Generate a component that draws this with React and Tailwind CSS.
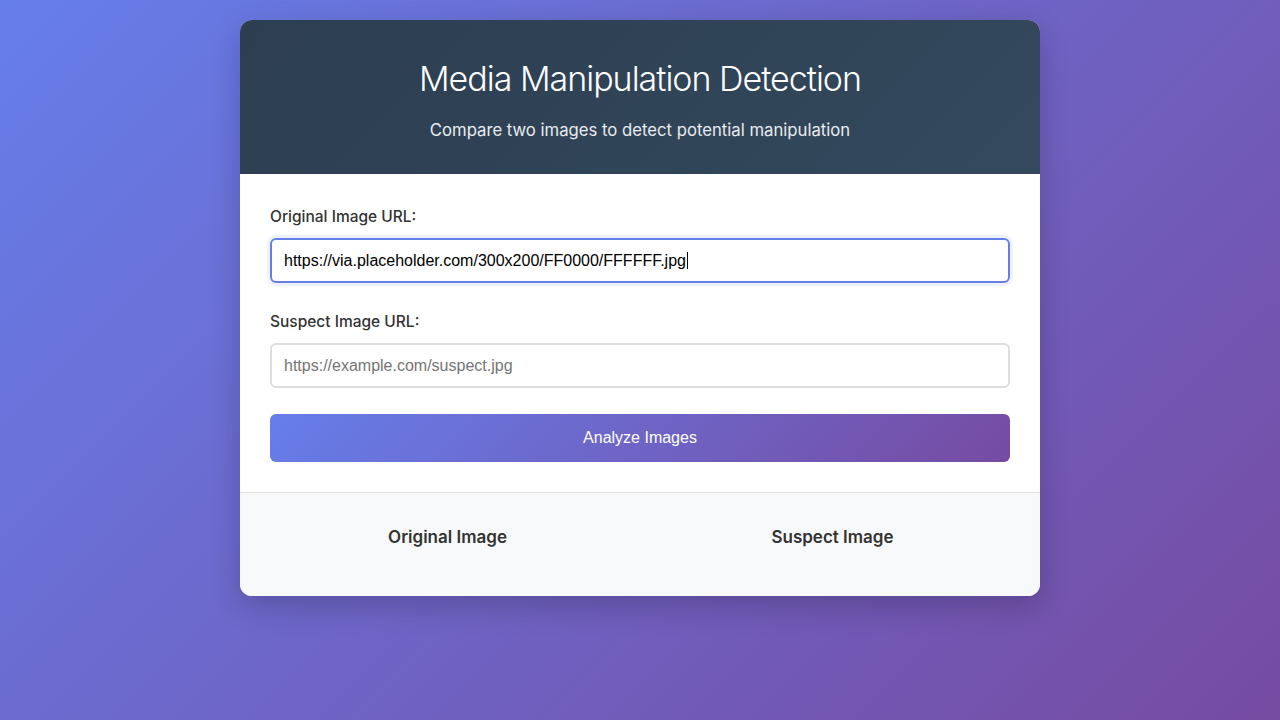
export default function App() {
  const ui = { fontFamily: "Inter, 'Noto Sans', sans-serif" };
  const arial = { fontFamily: "'Liberation Sans', Arial, sans-serif" };
  return (
    <div className="min-h-[720px] w-full bg-[linear-gradient(135deg,#667eea_0%,#764ba2_100%)] pt-[20px]" style={ui}>
      <div className="mx-auto w-[800px] overflow-hidden rounded-[12px] bg-white shadow-[0_10px_30px_rgba(0,0,0,0.2)]">
        <div className="bg-[linear-gradient(135deg,#2c3e50_0%,#34495e_100%)] px-[30px] pt-[38px] pb-[33px] text-center text-white">
          <h1 className="text-[34px] font-light leading-[42px] tracking-[-1px]">Media Manipulation Detection</h1>
          <p className="mt-[19px] text-[16.7px] leading-[22px] text-white/90">Compare two images to detect potential manipulation</p>
        </div>
        <div className="p-[30px]">
          <div className="mb-[26px]">
            <label className="mb-[9px] block pt-[1px] text-[15.5px] font-medium leading-[24px] text-[#333]">Original Image URL:</label>
            <div className="flex h-[45px] items-center rounded-[6px] border-2 border-[#667eea] px-[12px] text-[16px] text-black shadow-[0_0_0_3px_rgba(102,126,234,0.1)]" style={arial}>
              https://via.placeholder.com/300x200/FF0000/FFFFFF.jpg<span className="ml-[1px] inline-block h-[17px] w-[1px] bg-black"></span>
            </div>
          </div>
          <div className="mb-[26px]">
            <label className="mb-[9px] block pt-[1px] text-[15.5px] font-medium leading-[24px] text-[#333]">Suspect Image URL:</label>
            <div className="flex h-[45px] items-center rounded-[6px] border-2 border-[#ddd] px-[12px] text-[16px] text-[#757575]" style={arial}>
              https://example.com/suspect.jpg
            </div>
          </div>
          <button className="flex h-[48px] w-full items-center justify-center rounded-[6px] bg-[linear-gradient(135deg,#667eea_0%,#764ba2_100%)] text-[16px] text-white" style={arial}>
            Analyze Images
          </button>
        </div>
        <div className="border-t border-[#e0e0e0] bg-[#f8f9fa] px-[30px] pt-[30px] pb-[45px]">
          <div className="grid grid-cols-2 gap-[30px]">
            <h3 className="text-center text-[17px] font-semibold leading-[28px] text-[#333]">Original Image</h3>
            <h3 className="text-center text-[17px] font-semibold leading-[28px] text-[#333]">Suspect Image</h3>
          </div>
        </div>
      </div>
    </div>
  );
}
